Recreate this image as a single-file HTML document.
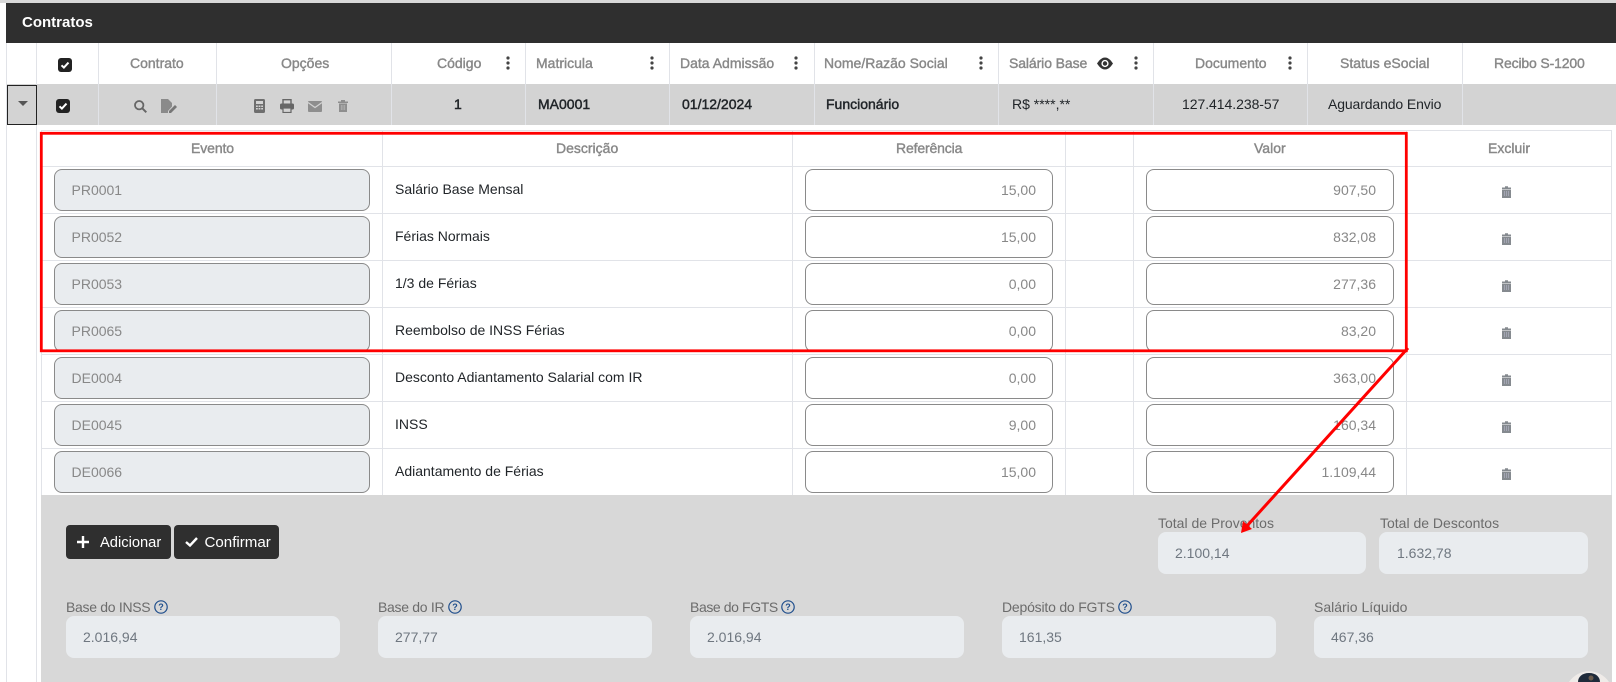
<!DOCTYPE html>
<html lang="pt-BR"><head><meta charset="utf-8"><title>Contratos</title>
<style>
*{box-sizing:border-box}
html,body{margin:0;padding:0;width:1616px;height:682px;overflow:hidden;background:#fff;font-family:"Liberation Sans",Arial,sans-serif;font-size:14px;color:#212529}
.a{position:absolute}
.v{position:absolute;width:1px;background:#e1e3e8}
.h{position:absolute;height:1px;background:#e1e3e8}
.t{position:absolute;line-height:20px;height:20px;white-space:nowrap}
.th{color:#888;font-size:14px;-webkit-text-stroke:.4px #888}
.b{font-weight:normal;-webkit-text-stroke:.45px #212529}
.in{position:absolute;height:42px;border:1px solid #8a8a8a;border-radius:8px;background:#fff;color:#888;font-size:14px;line-height:41px;padding:0 16px;white-space:nowrap}
.ev{left:54px;width:316px;background:#e9ecef;padding-left:16.500px}
.rf{left:805px;width:248px;text-align:right}
.vl{left:1146px;width:248px;text-align:right;padding-right:17px}
.ds{position:absolute;left:395px;line-height:20px;white-space:nowrap;color:#212529}
.lb{position:absolute;line-height:20px;white-space:nowrap;color:#6c6c6c;font-size:14px}
.f{position:absolute;height:42px;background:#e9ecef;border-radius:8px;color:#6f7780;font-size:14px;line-height:42px;padding-left:17px}
.btn{position:absolute;top:525px;height:34px;background:#2f2f2f;border-radius:4px;color:#fff}
svg{position:absolute;overflow:hidden}
</style></head><body>
<div class="a" style="left:0;top:0;width:1616px;height:3px;background:#d9d9d9"></div>
<div class="a" style="left:6px;top:3px;width:1610px;height:40px;background:#2f2f2f"></div>
<div class="t" style="left:22px;top:13px;color:#fff;font-size:15px;font-weight:bold">Contratos</div>

<div class="a" style="left:6px;top:84px;width:1610px;height:41px;background:#d3d3d3"></div>
<div class="v" style="left:6px;top:43px;height:639px"></div>
<div class="v" style="left:36px;top:43px;height:639px"></div>
<div class="v" style="left:98px;top:43px;height:82px"></div>
<div class="v" style="left:216px;top:43px;height:82px"></div>
<div class="v" style="left:391px;top:43px;height:82px"></div>
<div class="v" style="left:525px;top:43px;height:82px"></div>
<div class="v" style="left:669px;top:43px;height:82px"></div>
<div class="v" style="left:814px;top:43px;height:82px"></div>
<div class="v" style="left:998px;top:43px;height:82px"></div>
<div class="v" style="left:1153px;top:43px;height:82px"></div>
<div class="v" style="left:1307px;top:43px;height:82px"></div>
<div class="v" style="left:1462px;top:43px;height:82px"></div>
<div class="a" style="left:7px;top:85px;width:30px;height:40px;border:1px solid #222;background:#d3d3d3"></div>
<svg style="left:17px;top:101px" width="12" height="6"><path d="M1 0h10L6 5z" fill="#555"/></svg>

<svg style="left:58px;top:58px" width="14" height="14"><rect width="14" height="14" rx="3" fill="#222"/><path d="M3.500 7.300l2.400 2.300 4.600-5" stroke="#fff" stroke-width="2" fill="none"/></svg>
<svg style="left:56px;top:99px" width="14" height="14"><rect width="14" height="14" rx="3" fill="#222"/><path d="M3.500 7.300l2.400 2.300 4.600-5" stroke="#fff" stroke-width="2" fill="none"/></svg>

<div class="t th" style="left:130px;top:53px">Contrato</div>
<div class="t th" style="left:281px;top:53px">Opções</div>
<div class="t th" style="left:437px;top:53px">Código</div>
<div class="t th" style="left:536px;top:53px">Matricula</div>
<div class="t th" style="left:680px;top:53px">Data Admissão</div>
<div class="t th" style="left:824px;top:53px">Nome/Razão Social</div>
<div class="t th" style="left:1009px;top:53px;letter-spacing:-.1px">Salário Base</div>
<div class="t th" style="left:1195px;top:53px">Documento</div>
<div class="t th" style="left:1340px;top:53px">Status eSocial</div>
<div class="t th" style="left:1494px;top:53px;letter-spacing:-.15px">Recibo S-1200</div>

<svg style="left:506px;top:56px" width="4" height="14"><g fill="#444"><circle cx="2" cy="2" r="1.600"/><circle cx="2" cy="7" r="1.600"/><circle cx="2" cy="12" r="1.600"/></g></svg>
<svg style="left:650px;top:56px" width="4" height="14"><g fill="#444"><circle cx="2" cy="2" r="1.600"/><circle cx="2" cy="7" r="1.600"/><circle cx="2" cy="12" r="1.600"/></g></svg>
<svg style="left:794px;top:56px" width="4" height="14"><g fill="#444"><circle cx="2" cy="2" r="1.600"/><circle cx="2" cy="7" r="1.600"/><circle cx="2" cy="12" r="1.600"/></g></svg>
<svg style="left:979px;top:56px" width="4" height="14"><g fill="#444"><circle cx="2" cy="2" r="1.600"/><circle cx="2" cy="7" r="1.600"/><circle cx="2" cy="12" r="1.600"/></g></svg>
<svg style="left:1134px;top:56px" width="4" height="14"><g fill="#444"><circle cx="2" cy="2" r="1.600"/><circle cx="2" cy="7" r="1.600"/><circle cx="2" cy="12" r="1.600"/></g></svg>
<svg style="left:1288px;top:56px" width="4" height="14"><g fill="#444"><circle cx="2" cy="2" r="1.600"/><circle cx="2" cy="7" r="1.600"/><circle cx="2" cy="12" r="1.600"/></g></svg>
<svg style="left:1097px;top:57px" width="16" height="13"><path d="M0 6.500C3 2 5.500 .5 8 .5s5 1.500 8 6c-3 4.500-5.500 6-8 6s-5-1.500-8-6z" fill="#333"/><circle cx="8" cy="6.500" r="3.600" fill="#fff"/><circle cx="8" cy="6.500" r="2.200" fill="#333"/></svg>

<svg style="left:134px;top:100px" width="13" height="13"><circle cx="5.200" cy="5.200" r="4.200" fill="none" stroke="#666" stroke-width="1.800"/><path d="M8.300 8.300l4 4" stroke="#666" stroke-width="2"/></svg>
<svg style="left:161px;top:99px" width="17" height="14"><path d="M0 0h7l4 4v3.500L7 12v2H0z" fill="#8a8a8a"/><path d="M8 12l6-6 2 2-6 6H8z" fill="#777"/></svg>
<svg style="left:254px;top:99px" width="11" height="14"><rect width="11" height="14" rx="1.500" fill="#6e6e6e"/><rect x="2" y="2" width="7" height="3" fill="#d3d3d3"/><g fill="#d3d3d3"><rect x="2" y="6.500" width="1.800" height="1.500"/><rect x="4.600" y="6.500" width="1.800" height="1.500"/><rect x="7.200" y="6.500" width="1.800" height="1.500"/><rect x="2" y="9" width="1.800" height="1.500"/><rect x="4.600" y="9" width="1.800" height="1.500"/><rect x="7.200" y="9" width="1.800" height="1.500"/></g></svg>
<svg style="left:280px;top:99px" width="14" height="14"><path d="M3 5V0.700h8V5" fill="none" stroke="#666" stroke-width="1.400"/><rect y="4.500" width="14" height="6" rx="1.500" fill="#666"/><rect x="3" y="9" width="8" height="4.500" fill="#d3d3d3" stroke="#666" stroke-width="1.200"/></svg>
<svg style="left:308px;top:101px" width="14" height="11"><rect width="14" height="11" rx="1" fill="#8e8e8e"/><path d="M0 1.500l7 5 7-5" fill="none" stroke="#d3d3d3" stroke-width="1.200"/></svg>
<svg style="left:338px;top:100px" width="10" height="12"><path d="M0 1.500h3V0h4v1.500h3V3H0zM1 3.500h8V12H1z" fill="#8e8e8e"/><path d="M3.300 5v5M5 5v5M6.700 5v5" stroke="#b5b5b5" stroke-width=".8"/></svg>

<div class="t b" style="left:454px;top:94px">1</div>
<div class="t b" style="left:538px;top:94px">MA0001</div>
<div class="t b" style="left:682px;top:94px">01/12/2024</div>
<div class="t b" style="left:826px;top:94px">Funcionário</div>
<div class="t" style="left:1012px;top:94px">R$ ****,**</div>
<div class="t" style="left:1182px;top:94px;letter-spacing:-.05px">127.414.238-57</div>
<div class="t" style="left:1328px;top:94px;letter-spacing:-.12px">Aguardando Envio</div>

<div class="a" style="left:41px;top:130px;width:1571px;height:365px;border:1px solid #e1e3e8;border-bottom:0"></div>
<div class="h" style="left:41px;top:166px;width:1571px"></div>
<div class="h" style="left:41px;top:213px;width:1571px"></div>
<div class="h" style="left:41px;top:260px;width:1571px"></div>
<div class="h" style="left:41px;top:307px;width:1571px"></div>
<div class="h" style="left:41px;top:354px;width:1571px"></div>
<div class="h" style="left:41px;top:401px;width:1571px"></div>
<div class="h" style="left:41px;top:448px;width:1571px"></div>
<div class="v" style="left:382px;top:130px;height:365px"></div>
<div class="v" style="left:792px;top:130px;height:365px"></div>
<div class="v" style="left:1065px;top:130px;height:365px"></div>
<div class="v" style="left:1133px;top:130px;height:365px"></div>
<div class="v" style="left:1406px;top:130px;height:365px"></div>

<div class="t th" style="left:191px;top:138px;letter-spacing:-.1px">Evento</div>
<div class="t th" style="left:556px;top:138px">Descrição</div>
<div class="t th" style="left:896px;top:138px;letter-spacing:-.15px">Referência</div>
<div class="t th" style="left:1254px;top:138px">Valor</div>
<div class="t th" style="left:1488px;top:138px">Excluir</div>

<div class="in ev" style="top:169px">PR0001</div><div class="ds" style="top:179px">Salário Base Mensal</div><div class="in rf" style="top:169px">15,00</div><div class="in vl" style="top:169px">907,50</div>
<div class="in ev" style="top:216px">PR0052</div><div class="ds" style="top:226px">Férias Normais</div><div class="in rf" style="top:216px">15,00</div><div class="in vl" style="top:216px">832,08</div>
<div class="in ev" style="top:263px">PR0053</div><div class="ds" style="top:273px">1/3 de Férias</div><div class="in rf" style="top:263px">0,00</div><div class="in vl" style="top:263px">277,36</div>
<div class="in ev" style="top:310px">PR0065</div><div class="ds" style="top:320px">Reembolso de INSS Férias</div><div class="in rf" style="top:310px">0,00</div><div class="in vl" style="top:310px">83,20</div>
<div class="in ev" style="top:357px">DE0004</div><div class="ds" style="top:367px">Desconto Adiantamento Salarial com IR</div><div class="in rf" style="top:357px">0,00</div><div class="in vl" style="top:357px">363,00</div>
<div class="in ev" style="top:404px">DE0045</div><div class="ds" style="top:414px">INSS</div><div class="in rf" style="top:404px">9,00</div><div class="in vl" style="top:404px">160,34</div>
<div class="in ev" style="top:451px">DE0066</div><div class="ds" style="top:461px">Adiantamento de Férias</div><div class="in rf" style="top:451px">15,00</div><div class="in vl" style="top:451px">1.109,44</div>

<svg style="left:1501px;top:186px" width="11" height="12"><path d="M1 1.500h3V.3h3v1.200h3V3H1zM1 3.500h9V12H1z" fill="#858a8f"/><path d="M3.500 5v5M5.500 5v5M7.500 5v5" stroke="#aab" stroke-width=".8"/></svg>
<svg style="left:1501px;top:233px" width="11" height="12"><path d="M1 1.500h3V.3h3v1.200h3V3H1zM1 3.500h9V12H1z" fill="#858a8f"/><path d="M3.500 5v5M5.500 5v5M7.500 5v5" stroke="#aab" stroke-width=".8"/></svg>
<svg style="left:1501px;top:280px" width="11" height="12"><path d="M1 1.500h3V.3h3v1.200h3V3H1zM1 3.500h9V12H1z" fill="#858a8f"/><path d="M3.500 5v5M5.500 5v5M7.500 5v5" stroke="#aab" stroke-width=".8"/></svg>
<svg style="left:1501px;top:327px" width="11" height="12"><path d="M1 1.500h3V.3h3v1.200h3V3H1zM1 3.500h9V12H1z" fill="#858a8f"/><path d="M3.500 5v5M5.500 5v5M7.500 5v5" stroke="#aab" stroke-width=".8"/></svg>
<svg style="left:1501px;top:374px" width="11" height="12"><path d="M1 1.500h3V.3h3v1.200h3V3H1zM1 3.500h9V12H1z" fill="#858a8f"/><path d="M3.500 5v5M5.500 5v5M7.500 5v5" stroke="#aab" stroke-width=".8"/></svg>
<svg style="left:1501px;top:421px" width="11" height="12"><path d="M1 1.500h3V.3h3v1.200h3V3H1zM1 3.500h9V12H1z" fill="#858a8f"/><path d="M3.500 5v5M5.500 5v5M7.500 5v5" stroke="#aab" stroke-width=".8"/></svg>
<svg style="left:1501px;top:468px" width="11" height="12"><path d="M1 1.500h3V.3h3v1.200h3V3H1zM1 3.500h9V12H1z" fill="#858a8f"/><path d="M3.500 5v5M5.500 5v5M7.500 5v5" stroke="#aab" stroke-width=".8"/></svg>

<div class="a" style="left:41px;top:495px;width:1571px;height:187px;background:#d8d8d8"></div>
<div class="btn" style="left:66px;width:105px"></div>
<div class="btn" style="left:174px;width:105px"></div>
<svg style="left:77px;top:536px" width="12" height="12"><path d="M6 0v12M0 6h12" stroke="#fff" stroke-width="2.400"/></svg>
<svg style="left:185px;top:537px" width="13" height="10"><path d="M1 5l4 3.500L12 1" stroke="#fff" stroke-width="2.400" fill="none"/></svg>
<div class="t" style="left:100px;top:533px;color:#fff;font-size:14.700px">Adicionar</div>
<div class="t" style="left:204.500px;top:533px;color:#fff;font-size:15.100px">Confirmar</div>

<div class="lb" style="left:1158px;top:513px">Total de Proventos</div>
<div class="lb" style="left:1380px;top:513px">Total de Descontos</div>
<div class="f" style="left:1158px;top:532px;width:208px">2.100,14</div>
<div class="f" style="left:1379px;top:532px;width:209px;padding-left:18px">1.632,78</div>

<div class="lb" style="left:66px;top:597px;letter-spacing:-.3px">Base do INSS</div>
<div class="lb" style="left:378px;top:597px;letter-spacing:-.3px">Base do IR</div>
<div class="lb" style="left:690px;top:597px;letter-spacing:-.4px">Base do FGTS</div>
<div class="lb" style="left:1002px;top:597px;letter-spacing:-.2px">Depósito do FGTS</div>
<div class="lb" style="left:1314px;top:597px">Salário Líquido</div>
<svg style="left:154px;top:600px" width="14" height="14"><circle cx="7" cy="7" r="6.200" fill="none" stroke="#1f4e8c" stroke-width="1.200"/><text x="7" y="10" font-family="Liberation Sans" font-size="9" font-weight="bold" text-anchor="middle" fill="#1f4e8c">?</text></svg>
<svg style="left:448px;top:600px" width="14" height="14"><circle cx="7" cy="7" r="6.200" fill="none" stroke="#1f4e8c" stroke-width="1.200"/><text x="7" y="10" font-family="Liberation Sans" font-size="9" font-weight="bold" text-anchor="middle" fill="#1f4e8c">?</text></svg>
<svg style="left:781px;top:600px" width="14" height="14"><circle cx="7" cy="7" r="6.200" fill="none" stroke="#1f4e8c" stroke-width="1.200"/><text x="7" y="10" font-family="Liberation Sans" font-size="9" font-weight="bold" text-anchor="middle" fill="#1f4e8c">?</text></svg>
<svg style="left:1118px;top:600px" width="14" height="14"><circle cx="7" cy="7" r="6.200" fill="none" stroke="#1f4e8c" stroke-width="1.200"/><text x="7" y="10" font-family="Liberation Sans" font-size="9" font-weight="bold" text-anchor="middle" fill="#1f4e8c">?</text></svg>
<div class="f" style="left:66px;top:616px;width:274px">2.016,94</div>
<div class="f" style="left:378px;top:616px;width:274px">277,77</div>
<div class="f" style="left:690px;top:616px;width:274px">2.016,94</div>
<div class="f" style="left:1002px;top:616px;width:274px">161,35</div>
<div class="f" style="left:1314px;top:616px;width:274px">467,36</div>

<svg style="left:0;top:0" width="1616" height="682">
<rect x="41.300" y="133.300" width="1365" height="217.500" fill="none" stroke="#f00" stroke-width="2.800"/>
<path d="M1408 348L1246 527" stroke="#f00" stroke-width="3"/>
<path d="M1241 533l2-12 9 8z" fill="#f00"/>
<path d="M1569 682A24 24 0 0 1 1609 682z" fill="#efebe8"/>
<path d="M1578 682C1578 677 1582 673 1589 673S1600 677 1600 682z" fill="#1f2a3a"/>
<circle cx="1591" cy="678" r="2.500" fill="#6a5a4c"/>
</svg>
</body></html>
